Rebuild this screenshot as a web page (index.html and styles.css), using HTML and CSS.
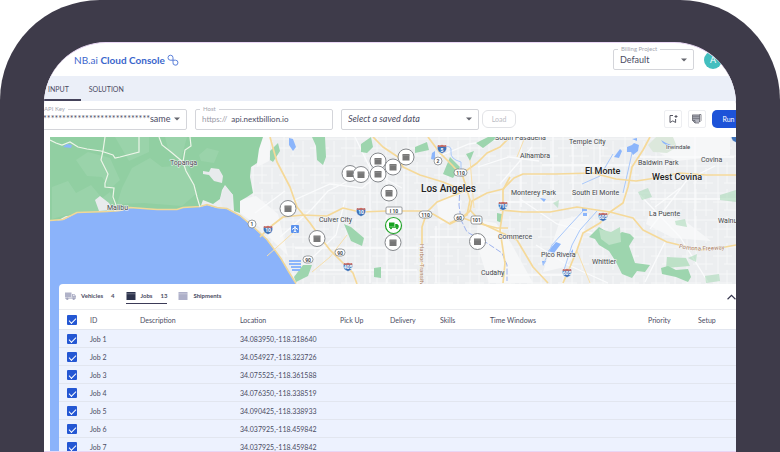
FILE: index.html
```html
<!DOCTYPE html>
<html lang="en">
<head>
<meta charset="utf-8">
<title>NB.ai Cloud Console</title>
<link rel="stylesheet" href="styles.css">
</head>
<body>
<div class="device">
<main class="screen">
  <header class="header">
    <h1 class="brand"><span>NB.ai <b>Cloud Console</b></span>
      <svg class="brand-mark" viewBox="0 0 12 12" aria-hidden="true"><path d="M6 6.200H3.200A2.500 2.500 0 1 1 6 3.700V8.200A2.500 2.500 0 1 0 8.500 6.200H6"/></svg>
    </h1>
    <div class="field billing">
      <label for="billing">Billing Project</label>
      <select id="billing"><option>Default</option></select>
      <svg class="caret" viewBox="0 0 6 4" aria-hidden="true"><path d="M0 .5h6L3 3.500z"/></svg>
    </div>
    <button class="avatar" type="button">A</button>
  </header>
  <nav class="tabs">
    <a class="tab active" href="#input">INPUT</a>
    <a class="tab" href="#solution">SOLUTION</a>
  </nav>
  <form class="toolbar">
    <div class="field wide">
      <label for="key">API Key</label>
      <select id="key"><option>****************************same</option></select>
      <svg class="caret" viewBox="0 0 6 4" aria-hidden="true"><path d="M0 .5h6L3 3.500z"/></svg>
    </div>
    <div class="field">
      <label for="host">Host</label>
      <span class="prefix">https://</span>
      <input id="host" type="text" value="api.nextbillion.io">
    </div>
    <div class="field saved">
      <select id="saved" aria-label="Saved data"><option>Select a saved data</option></select>
      <svg class="caret" viewBox="0 0 6 4" aria-hidden="true"><path d="M0 .5h6L3 3.500z"/></svg>
    </div>
    <button class="load" type="button" disabled>Load</button>
    <div class="actions">
      <button class="icon-button" type="button" aria-label="Save">
        <svg viewBox="0 0 10 10" aria-hidden="true"><path class="line" d="M5 1.500H2v7l2.800-1.600 2.800 1.600V5M8 1v3M6.500 2.500h3"/></svg>
      </button>
      <button class="icon-button" type="button" aria-label="Edit notes">
        <svg viewBox="0 0 10 10" aria-hidden="true"><path fill="#b3b5bf" d="M.5.800h7v8H3L.500 6.500z"/><path class="line thin" d="M.5 1h7M.5 2.800h7M.5 4.700h7M.5.800v5.700L3 9h4M.5 6.500H3V9M9 .500v6L7.500 8V.500z"/></svg>
      </button>
      <button class="run" type="button">Run</button>
    </div>
  </form>
  <section class="stage">
    <svg class="map" viewBox="50 137 686 315" preserveAspectRatio="xMinYMin slice" role="img" aria-label="Map of Los Angeles">
      <defs>
        <pattern id="streets" width="31" height="27" patternUnits="userSpaceOnUse">
          <path d="M0 4h31M0 13h19M11 21h20M5 0v27M14 0v21M24 6v21" stroke="#f6f7f8" stroke-width="1" fill="none"/>
        </pattern>
        <g id="job">
          <circle r="8" fill="#fff" stroke="#85888c" stroke-width="1"/>
          <path d="M-3.500-3h7v6.500h-7z" fill="#777"/><path d="M-3.500-1.600h7" stroke="#999" stroke-width=".6"/>
        </g>
        <g id="interstate">
          <path d="M-4-4Q-2-3 0-4.300Q2-3 4-4L4.800-1Q4.500 3 0 4.500Q-4.500 3-4.800-1z" fill="#3f72b8" stroke="#fff" stroke-width=".5"/>
          <path d="M-4-4Q-2-3 0-4.300Q2-3 4-4L4.500-2.200h-9z" fill="#d66b59"/>
        </g>
      </defs>
      <rect x="50" y="137" width="686" height="315" fill="#eceef0"/>
      <rect x="250" y="137" width="486" height="155" fill="url(#streets)"/>
      <g fill="#f6f7f8">
        <path d="M257 137h14l-2 24-12 6zM240 200l16-4 22 18 10 42-30-30-18-13z"/>
        <path d="M437 203l15-10 10 8-3 17-19 6zM478 220l18 3 15 20 22 40h-44l-13-42zM560 220l30-7-13 38-12 16-22 5zM660 137h70v18l-53 6-20-9zM650 210l35 11 26 20-38-3-27-14z"/>
      </g>
      <g fill="none" stroke="#fafbfc" stroke-width="1.300">
        <path d="M280 237l32-28 16-18 55-27M290 202l40-18 32 4 32-26M255 213l30-22M310 260l26-25 9-35M435 158l34-14 39-6M478 167l31-10 30 4M520 199l37 25 38 10M640 195l40 42 28 45M650 229l37-49 28-14M655 207l25-19M645 282l21-42M536 245l30 19 42 19M355 137l17 35 30 16M500 184l32-37"/>
        <path d="M370 160v123M387 160v123M404 169v114M436 226v57M521 137v70M553 137v61M573 137v63M600 137v47M695 137v114M295 248h123M320 270h97M640 157h94M542 165h89M505 202h75M650 199h86M430 237h72M510 275h54"/>
      </g>
      <path fill="#91cfa2" d="M50 137h213l-4 12-2 14-6 4-1 10 3 16-6 4-7 4v12l-6-2-1-16-8-10-3 5-2 9-7 5-10-4-3 8-17 2-15 2-20-2-27-1-10 4-31 2-14 1-13 7-13 1z"/>
      <g fill="#9ad3aa">
        <path d="M52 187l16-6 8 12 15-8 11 13 8-6 6 18-27 3-23 2-14 4zM76 160l12-8 22 6 10 22-10 9-8-12-15-1zM132 168l18-10 12 9 26-2 8 29-14 12-38-3-27 1 5-16zM115 137h34v15l-20 9zM165 137h22l-6 22-13-10zM199 155l8-7 12 3-5 12-13-2z"/>
      </g>
      <path fill="#e8ebed" d="M95 200l5-4 9 7 4 7-14 1zM203 171l6 1 2-4 8 1 4 7-1 7-8-2-5-6-6-1zM220 199l5-13 8 9-2 14-8-1z"/>
      <path fill="#8bb3fa" d="M50 221l13-1 14-7 30-1 13-1 10-3 27 2 20 0 6-2 17-1 7-2 10 3 10 1 13 7 13 11 14 13 14 19 7 12 8 13v169H50z"/>
      <path fill="none" stroke="#f0d798" stroke-width="1.500" d="M50 220.500l13-1 14-7 30-1 13-1 10-3 27 2 20 0 6-2 17-1 7-2 10 3 10 1 13 7 13 11 14 13 14 19 7 12 8 13"/>
      <g fill="none" stroke="#edf5e9" stroke-width="1.200">
        <path d="M50 140l6 3 6 2 8-3 8 5 9 2 14 2 12 4 2 3 5-1 19-5V137M105 137l-2 14-2 9 7 14-3 9 0 4 9 1-1 9 3 8-1 6M159 137l3 8 9 7 12 10 2-12 6-4-1-9M183 162l3 9 8 14 3 12 3 10"/>
      </g>
      <g fill="#9dd5ae">
        <path d="M270 151l8-8 2 8-7 11-3-2zM312 137h13l1 20-3 8-6-5-1-14zM361 144l10-7 2 10-6 6-6-1zM443 174l7-17 10 10-7 11zM466 154l8-3-4 10zM476 143l12-6h10l-15 11zM344 224l7 3 13 11-2 8-11-5zM374 268l7-1v11l-7-1zM294 277l9-12 9 0-4 11-12 6zM497 213l5 1v9l-5-2zM415 147l12-5 2 8-14 3z"/>
        <path opacity=".5" d="M553 203l6-3-1 8zM675 221l10-2 2 8-11-2zM688 258l9-4-1 8zM705 276l14-2 1 7-14 2zM720 195l16-5v12l-16-2zM638 192l10-4 4 9-10 3z"/>
        <path d="M589 237l10-10 10 6 10 1 3-2 8 2 4 4-5 8 6 17 15 2-5 7-8-1-5 7-10-4-6-12-7-11-10-6-4-6z"/>
        <path fill="#bde1c7" d="M599 229l12 3 9-5 1 15-12 3-8-6zM667 257l19 1 4 8-24 2z"/>
        <path d="M661 268l7-2 8 4 12-1 3 8-3 5-12-5-14-3z"/>
        <path fill="#dce8dc" d="M648 145l8-8h17l4 10-10 6-14-1z"/>
      </g>
      <g fill="#8bb5fb">
        <path d="M63 147l4-3 5 1-1 3zM289 138l4 1 3 8-3 4-4-6zM432 153l3-2v9l-4-1zM627 147l5-2 2-2 5 2-1 6-5 4-2-3-4 0zM614 157l6-8 2 2-3 7zM632 139l5-1v3zM540 198l6 1-2 3zM548 251l8-9 5 2-7 9zM568 256l5-7v8zM582 208h5v3h-5zM583 213h4v3h-4zM661 140l5 3 5 2-3 1-5-3zM542 261l4 0-3 5zM289 260h12v2h-12zM289 263h12v2h-12zM291 266h10v2h-10zM292 269h8v2h-8z"/>
      </g>
      <g fill="none" stroke="#a9c8fa" stroke-width="1">
        <path d="M445 147q7-2 6 5t10 10v15M583 211l-13 14-18 20-9 20M597 211l-17 19-8 15-9 28M632 153l-4 18-5 22M582 184l18-8 13-22"/>
        <path stroke="#9eb3ee" stroke-dasharray="6 2" d="M460 187l-1 18 2 15 6 12 20 11 15 10 5 12v16"/>
      </g>
      <g fill="none" stroke="#f5d999" stroke-width="1.700" stroke-linejoin="round">
        <path d="M270 137l3 11 4 14 13 25 7 20 13 16 10 14 10 13 12 12 11 11 4 11"/>
        <path d="M260 237l10-10 13-10 20-2 24 1 16-8 17 4 27-1h33l13 3 17 10 10-5 10-8 2-10 15-8 16-4 11-11 9-4h33l37-1 23 6 20 2 20-3 23-5 27 2h30l6 3"/>
        <path d="M373 137l10 10 15 10 5 10 17 8 23 7 24 10M428 137l12 16 12 12 11 12 4 13-30 12-10 10-5 15v56M510 137l-10 10-13 6-10 10-14 10"/>
        <path d="M467 190l3 10-3 15-17 8M463 218l14 5 20 5h11M500 210l23 2 27 0 27-5 33 5 23 6 10 12 24 12 33 8 20-2 16-3"/>
        <path d="M650 137l-7 13-11 17-4 20-5 16-13 9-10 11-17 10-6 17-7 17-7 16M510 177l-7 13v20l-3 20 5 33-2 20M470 210l13 14 17 8 17 8 16 27 15 16"/>
      </g>
      <g fill="none" stroke="#f7dfac" stroke-width="1"><path d="M312 272l18-15 17-22M470 160l4 48M295 231l-28 25M525 137l-8 20M590 283l-13-32"/></g>
      <g class="place">
        <text x="170" y="165">Topanga</text><text x="107" y="210">Malibu</text>
        <text x="319" y="222">Culver City</text><text x="481" y="275">Cudahy</text>
        <text x="495" y="140">South Pasadena</text><text x="569" y="144">Temple City</text>
        <text x="520" y="158">Alhambra</text><text x="666" y="149" class="minor">Irwindale</text>
        <text x="638" y="165">Baldwin Park</text><text x="701" y="162">Covina</text>
        <text x="511" y="195">Monterey Park</text><text x="572" y="195">South El Monte</text>
        <text x="649" y="216">La Puente</text><text x="718" y="223">Walnut</text>
        <text x="498" y="239">Commerce</text><text x="541" y="257">Pico Rivera</text><text x="592" y="264">Whittier</text>
        <text x="585" y="174" class="town">El Monte</text><text x="652" y="180" class="town">West Covina</text>
        <text x="421" y="192" class="city">Los Angeles</text>
        <path id="freeway" fill="none" stroke="none" d="M679 248q18 5 57 0"/>
        <text class="road"><textPath href="#freeway">Pomona Freeway</textPath></text>
        <text class="road" transform="translate(420 244) rotate(90)">Harbor Transitway</text>
      </g>
      <g class="shields">
        <use href="#interstate" x="268" y="230"/><use href="#interstate" x="361" y="212"/><use href="#interstate" x="442" y="149"/><use href="#interstate" x="348" y="267"/><use href="#interstate" x="503" y="206"/><use href="#interstate" x="603" y="217"/><use href="#interstate" x="567" y="273"/><use href="#interstate" x="736" y="138"/>
        <g class="numbers"><text x="268" y="232">10</text><text x="361" y="214">10</text><text x="442" y="152">5</text><text x="348" y="269">405</text><text x="503" y="208">710</text><text x="603" y="219">605</text><text x="567" y="275">605</text></g>
        <g fill="#fff" stroke="#72777b" stroke-width=".7">
          <circle cx="252" cy="224" r="4"/><circle cx="438" cy="161" r="4"/>
          <rect x="454" y="169" width="13" height="7" rx="3.500"/><rect x="419" y="211" width="13" height="7" rx="3.500"/>
          <rect x="454" y="214" width="10" height="7" rx="3.500"/><rect x="471" y="216" width="11" height="8" rx="2"/>
          <rect x="335" y="249" width="10" height="7" rx="3.500"/><rect x="303" y="256" width="10" height="7" rx="3.500"/>
          <rect x="386" y="207" width="16" height="7" rx="1"/>
        </g>
        <g class="numbers dark"><text x="252" y="226">1</text><text x="438" y="163">2</text><text x="460.500" y="174.500">110</text><text x="425.500" y="216.500">110</text><text x="459" y="219.500">60</text><text x="476.500" y="222">101</text><text x="340" y="254.500">90</text><text x="308" y="261.500">90</text><text x="394" y="212.500">I 10</text></g>
      </g>
      <rect x="291" y="225" width="8" height="8" rx="1" fill="#5a91ec"/>
      <path d="M295 226v6M292 229.500l3-2 3 2M293.500 232l1.500-1 1.500 1" fill="none" stroke="#fff"/>
      <use href="#job" x="350" y="173.500"/><use href="#job" x="361" y="174.500"/><use href="#job" x="378" y="161"/><use href="#job" x="378" y="174"/><use href="#job" x="393" y="167"/><use href="#job" x="406" y="157"/><use href="#job" x="389" y="193"/><use href="#job" x="288" y="208.500"/><use href="#job" x="317" y="238.500"/><use href="#job" x="393" y="242.500"/><use href="#job" x="477.500" y="241.500"/>
      <circle cx="393.500" cy="225.500" r="8" fill="#fff" stroke="#24a52b" stroke-width="1.200"/>
      <path fill="#18a321" d="M389 222.500h5.500v4H389zM395.200 224h2l1.500 1.500v2.200h-3.500zM389 226.800h9.700v1H389z"/><circle cx="391" cy="228.300" r="1" fill="#18a321"/><circle cx="397" cy="228.300" r="1" fill="#18a321"/>
    </svg>
    <div class="panel">
      <nav class="panel-tabs">
        <a class="panel-tab" href="#vehicles">
          <svg class="truck" viewBox="0 0 11 8" aria-hidden="true"><path fill="#b0b2c8" d="M0 .500h6.500v4.500H0zM7 2h2.300L11 4v2.800H7z"/><path fill="#c9cad9" d="M0 5.300h11V7H0z"/><circle cx="2.300" cy="6.800" r="1.200" fill="#a3a5bd"/><circle cx="8.700" cy="6.800" r="1.200" fill="#a3a5bd"/><path fill="#fff" d="M8 2.800h1l.800 1H8z"/></svg>
          Vehicles <span>4</span></a>
        <a class="panel-tab active" href="#jobs">
          <svg class="box" viewBox="0 0 9 8" aria-hidden="true"><path d="M0 0h9v8H0z"/><path class="lid" d="M0 1.800h9"/></svg>
          Jobs <span>13</span></a>
        <a class="panel-tab" href="#shipments">
          <svg class="box" viewBox="0 0 9 8" aria-hidden="true"><path d="M0 0h9v8H0z"/><path class="lid" d="M0 1.800h9"/></svg>
          Shipments</a>
        <button class="collapse" type="button" aria-label="Collapse panel"><svg viewBox="0 0 8 5" aria-hidden="true"><path d="M.5 4.500L4 1l3.500 3.500"/></svg></button>
      </nav>
      <table class="jobs">
        <colgroup><col class="c-check"><col class="c-small"><col class="c-large"><col class="c-large"><col class="c-small"><col class="c-small"><col class="c-small"><col><col class="c-small"><col class="c-last"></colgroup>
        <thead><tr><th><input type="checkbox" aria-label="Select all jobs" checked></th><th>ID</th><th>Description</th><th>Location</th><th>Pick Up</th><th>Delivery</th><th>Skills</th><th>Time Windows</th><th>Priority</th><th>Setup</th></tr></thead>
        <tbody>
          <tr><td><input type="checkbox" aria-label="Job 1" checked></td><td>Job 1</td><td></td><td>34.083950,-118.318640</td><td></td><td></td><td></td><td></td><td></td><td></td></tr>
          <tr><td><input type="checkbox" aria-label="Job 2" checked></td><td>Job 2</td><td></td><td>34.054927,-118.323726</td><td></td><td></td><td></td><td></td><td></td><td></td></tr>
          <tr><td><input type="checkbox" aria-label="Job 3" checked></td><td>Job 3</td><td></td><td>34.075525,-118.361588</td><td></td><td></td><td></td><td></td><td></td><td></td></tr>
          <tr><td><input type="checkbox" aria-label="Job 4" checked></td><td>Job 4</td><td></td><td>34.076350,-118.338519</td><td></td><td></td><td></td><td></td><td></td><td></td></tr>
          <tr><td><input type="checkbox" aria-label="Job 5" checked></td><td>Job 5</td><td></td><td>34.090425,-118.338933</td><td></td><td></td><td></td><td></td><td></td><td></td></tr>
          <tr><td><input type="checkbox" aria-label="Job 6" checked></td><td>Job 6</td><td></td><td>34.037925,-118.459842</td><td></td><td></td><td></td><td></td><td></td><td></td></tr>
          <tr><td><input type="checkbox" aria-label="Job 7" checked></td><td>Job 7</td><td></td><td>34.037925,-118.459842</td><td></td><td></td><td></td><td></td><td></td><td></td></tr>
        </tbody>
      </table>
    </div>
  </section>
</main>
</div>
</body>
</html>
```
FILE: styles.css
```css
* { box-sizing: border-box; }
body {
  margin: 0;
  background: #fff;
  color: #4b4c63;
  font: 7px/10px Lato, "Liberation Sans", sans-serif;
}
button, input, select { font: inherit; color: inherit; }
a { color: inherit; text-decoration: none; }
svg { display: block; flex: none; }

.device {
  height: 100vh;
  padding: 42px 44px 0;
  background: #3e3b4a;
  border-radius: 100px 100px 0 0;
  overflow: hidden;
}
.screen {
  display: flex;
  flex-direction: column;
  height: 100%;
  background: #fff;
  border: solid #e9d6f5;
  border-width: 1px 0;
  border-radius: 62px 62px 0 0;
  overflow: hidden;
}

.header {
  display: flex;
  align-items: center;
  flex: none;
  height: 33px;
  padding: 0 14px 0 30px;
}
.brand {
  display: flex;
  align-items: center;
  gap: 2px;
  margin: 0 auto 0 0;
  color: #3a66cc;
  font-size: 10px;
  line-height: 12px;
  font-weight: 400;
}
.brand-mark { width: 12px; height: 12px; fill: none; stroke: #5a7fd8; stroke-width: 1; }
.avatar {
  width: 18px;
  height: 18px;
  margin-left: 10px;
  padding: 0;
  border: 0;
  border-radius: 50%;
  background: #43bfbf;
  color: #fff;
  font-size: 9px;
}

.field {
  position: relative;
  display: flex;
  align-items: center;
  flex: none;
  width: 138px;
  height: 21px;
  padding: 0 6px;
  border: 1px solid #d4d5da;
  border-radius: 2px;
  font-size: 8px;
}
.field label {
  position: absolute;
  top: -5px;
  left: 4px;
  padding: 0 3px;
  background: #fff;
  color: #a5a6b0;
  font-size: 6px;
  line-height: 8px;
}
.field select, .field input {
  flex: 1;
  min-width: 0;
  padding: 0;
  border: 0;
  background: none;
  appearance: none;
  outline: 0;
}
.field .caret { width: 6px; height: 4px; fill: #65666e; }
.field .prefix { margin-right: 4px; color: #999aa6; }
.field select { font-size: 9px; }
.billing { width: 81px; }
.wide { width: 151px; }
.saved select { font-style: italic; }

.tabs {
  display: flex;
  flex: none;
  height: 25px;
  background: #ebeff8;
}
.tab { padding: 8px; border-bottom: 2px solid transparent; }
.tab:first-child { padding: 8px 12px 5px 4px; }
.tab.active { border-color: #44425a; }

.toolbar {
  display: flex;
  align-items: center;
  flex: none;
  gap: 8px;
  height: 36px;
  margin: 0 -9px 0 -8px;
}
.load {
  height: 18px;
  width: 34px;
  margin-left: -5px;
  padding: 0;
  border: 1px solid #e2e3e6;
  border-radius: 6px;
  background: #fff;
  color: #bcbdc4;
}
.actions { display: flex; gap: 6px; margin-left: auto; }
.icon-button {
  display: grid;
  place-items: center;
  width: 18px;
  height: 18px;
  padding: 0;
  border: 1px solid #edeef1;
  border-radius: 2px;
  background: #fff;
}
.icon-button svg { width: 10px; height: 10px; }
.icon-button .line { fill: none; stroke: #565762; stroke-width: 1; }
.icon-button .thin { stroke-width: .7; }
.run {
  width: 33px;
  height: 18px;
  padding: 0;
  border: 0;
  border-radius: 5px;
  background: #1d53d8;
  color: #fff;
}

.stage {
  display: grid;
  grid-template: minmax(0, 1fr) / minmax(0, 1fr);
  flex: 1;
  min-height: 0;
  margin-left: 6px;
}
.map, .panel { grid-area: 1 / 1; }
.map { width: 100%; height: 100%; }
.place { fill: #44474b; font: 7px Roboto, sans-serif; paint-order: stroke; stroke: #f5f6f7; stroke-width: 1px; }
.place .minor { font-size: 6px; }
.place .town { fill: #222; font-size: 9px; font-weight: 500; }
.place .city { fill: #222; font-size: 10px; font-weight: 500; }
.place .road { fill: #a87859; font-size: 6px; }
.numbers { fill: #fff; font: 700 5px Roboto, sans-serif; text-anchor: middle; }
.numbers.dark { fill: #45484c; }

.panel {
  margin: 147px 0 0 9px;
  background: #fff;
  border-top-left-radius: 4px;
  overflow: hidden;
}
.panel-tabs {
  display: flex;
  align-items: center;
  height: 26px;
  padding: 0 0 0 6px;
  border-bottom: 1px solid #ebecef;
  font-size: 6px;
  font-weight: 700;
}
.panel-tab {
  display: flex;
  align-items: center;
  gap: 5px;
  height: 15px;
  margin-right: 11px;
  border-bottom: 1px solid transparent;
}
.panel-tab span { margin-left: 3px; }
.panel-tab.active { border-color: #3b3b57; }
.truck { width: 11px; height: 8px; }
.box { width: 10px; height: 8px; fill: #aeb0c9; }
.active .box { fill: #2d334c; }
.lid { stroke: #fff; stroke-width: 1; opacity: .3; }
.collapse { margin-left: auto; padding: 0; border: 0; background: none; }
.collapse svg { width: 9px; height: 6px; fill: none; stroke: #34344c; stroke-width: 1; }

.jobs {
  width: 100%;
  table-layout: fixed;
  border-collapse: separate;
  border-spacing: 0;
}
.c-check { width: 31px; }
.c-small { width: 50px; }
.c-large { width: 100px; }
.c-last { width: 38px; }
.jobs th, .jobs td {
  height: 18px;
  padding: 0;
  border-bottom: 1px solid #e2e6ef;
  text-align: left;
  white-space: nowrap;
}
.jobs th { height: 20px; font-weight: 400; }
.jobs td { background: #edf2fe; }
.jobs input {
  display: block;
  width: 10px;
  height: 10px;
  margin: 0 0 0 8px;
  border-radius: 1px;
  appearance: none;
  background: #2457d3;
}
.jobs input:checked::before {
  content: "";
  display: block;
  width: 6px;
  height: 3px;
  margin: 3px 2px;
  border: solid #fff;
  border-width: 0 0 1px 1px;
  transform: rotate(-45deg);
}
```
